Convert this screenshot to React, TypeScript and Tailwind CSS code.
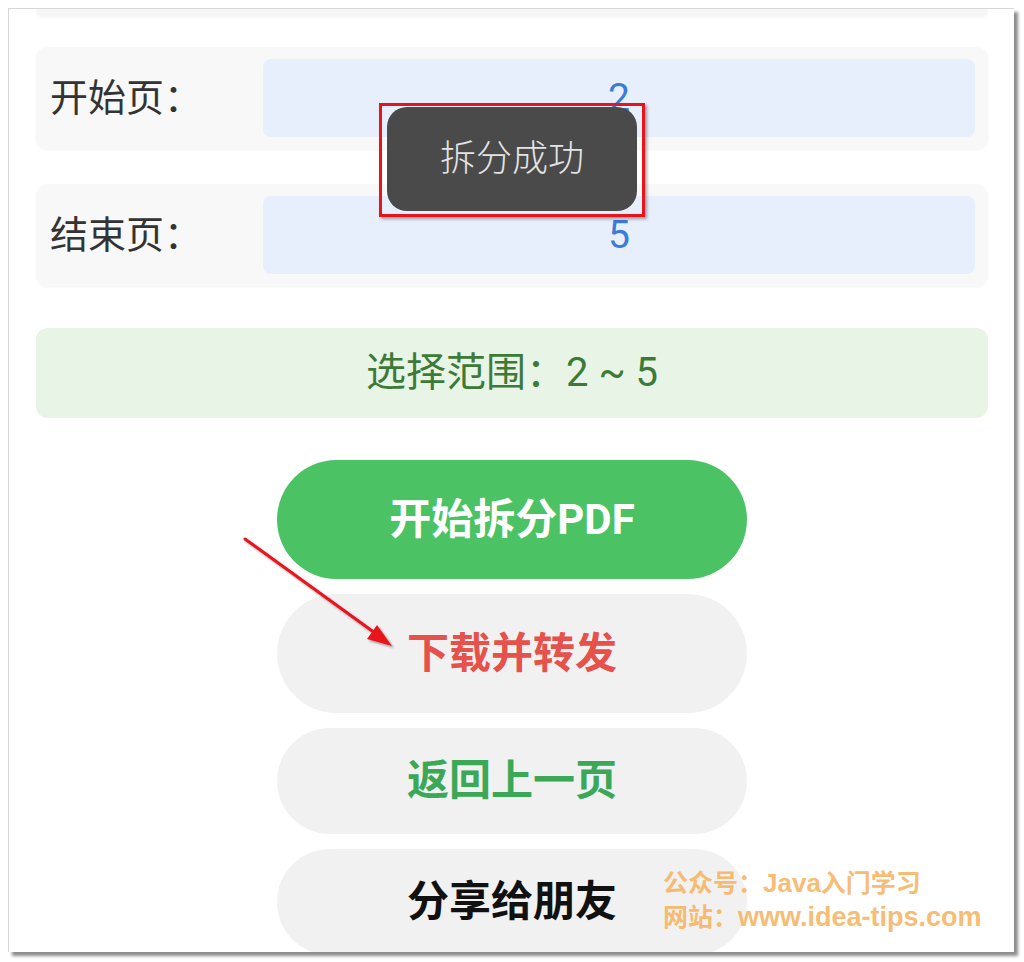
import React from 'react';

const cjk = { fontFamily: 'Roboto, "Noto Sans CJK SC", sans-serif' };

const PageField: React.FC<{ label: string; value: string }> = ({ label, value }) => (
  <div className="h-[102px] rounded-[12px] bg-[#f8f8f8] shadow-[0_1px_3px_rgba(0,0,0,0.05)] flex items-center pl-[14px] pr-[13px]">
    <div className="w-[213px] text-[38px] text-[#333333] leading-none">{label}</div>
    <div className="flex-1 h-[78px] rounded-[8px] bg-[#e8effc] flex items-center justify-center text-[39px] text-[#3c7bd8] leading-none">
      {value}
    </div>
  </div>
);

const PillButton: React.FC<{ text: string; bg: string; color: string; h: string }> = ({ text, bg, color, h }) => (
  <div className={`w-[470px] ${h} rounded-full ${bg} flex items-center justify-center`}>
    <span className={`text-[42px] font-bold leading-none ${color}`}>{text}</span>
  </div>
);

export default function App() {
  return (
    <div className="relative w-[1024px] h-[962px] bg-white overflow-hidden" style={cjk}>
      <div className="pt-[8px] pl-[8px]">
        {/* screenshot panel */}
        <div className="w-[1006px] h-[944px] bg-white border-l border-t border-[#d6d6d6] shadow-[4px_4px_3px_rgba(0,0,0,0.45)] overflow-hidden pl-[27px] pr-[26px]">
          <div className="h-[7px] rounded-b-[12px] bg-[#f6f6f6] shadow-[0_2px_3px_rgba(0,0,0,0.04)]" />

          <div className="mt-[31px] flex flex-col gap-[35px]">
            <PageField label="开始页：" value="2" />
            <PageField label="结束页：" value="5" />
          </div>

          <div className="mt-[42px] h-[90px] rounded-[12px] bg-[#e7f4e6] flex items-center justify-center">
            <span className="text-[40px] text-[#3d7a37] leading-none">选择范围：2 ~ 5</span>
          </div>

          <div className="mt-[42px] flex flex-col items-center gap-[15px]">
            <PillButton text="开始拆分PDF" bg="bg-[#4bc263]" color="text-white" h="h-[119px]" />
            <PillButton text="下载并转发" bg="bg-[#f1f1f1]" color="text-[#e6514b]" h="h-[119px]" />
            <PillButton text="返回上一页" bg="bg-[#f1f1f1]" color="text-[#3ba858]" h="h-[106px]" />
            <PillButton text="分享给朋友" bg="bg-[#f1f1f1]" color="text-[#111111]" h="h-[106px]" />
          </div>
        </div>
      </div>

      {/* toast with red highlight */}
      <div className="absolute left-[379px] top-[103px] w-[266px] h-[114px] border-[3px] border-[#e8141c] shadow-[2px_2px_3px_rgba(0,0,0,0.35)]">
        <div className="absolute left-[5px] top-[1px] w-[250px] h-[104px] rounded-[20px] bg-[#4a4a4a] flex items-center justify-center">
          <span className="text-[36px] text-[#e4e4e4] leading-none font-light">拆分成功</span>
        </div>
      </div>

      {/* arrow */}
      <svg className="absolute left-0 top-0" width="1024" height="962" viewBox="0 0 1024 962">
        <defs>
          <filter id="sh" x="-20%" y="-20%" width="140%" height="140%">
            <feDropShadow dx="2" dy="2" stdDeviation="1.2" floodColor="#000" floodOpacity="0.35" />
          </filter>
        </defs>
        <g filter="url(#sh)">
          <line x1="245" y1="539" x2="375" y2="633" stroke="#e8141c" strokeWidth="3" strokeLinecap="round" />
          <polygon points="392,646 377,625 367,639" fill="#e8141c" />
        </g>
      </svg>

      {/* watermark */}
      <div
        className="absolute left-[663px] top-[865px] text-[25px] font-bold leading-[32px] text-[#f6b462]/90"
        style={{ fontFamily: '"Noto Sans CJK SC", sans-serif' }}
      >
        <div>
          公众号：<span className="text-[26px]" style={{ fontFamily: '"Liberation Sans", sans-serif' }}>Java</span>入门学习
        </div>
        <div>
          网站：<span className="text-[27px]" style={{ fontFamily: '"Liberation Sans", sans-serif' }}>www.idea-tips.com</span>
        </div>
      </div>
    </div>
  );
}
